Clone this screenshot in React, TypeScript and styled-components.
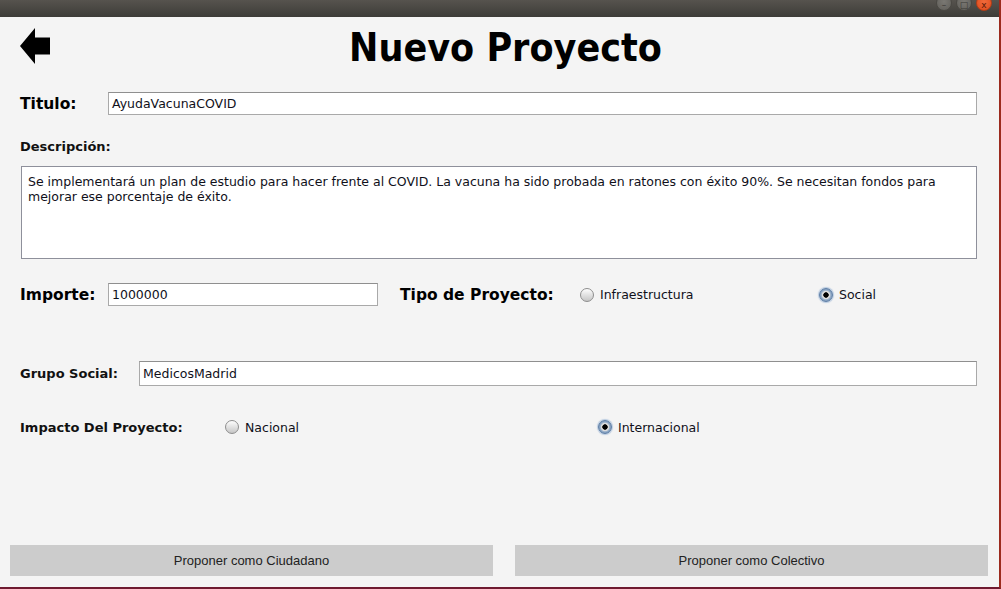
import React from "react";
import styled, { createGlobalStyle } from "styled-components";

const Global = createGlobalStyle`
  html, body { margin: 0; padding: 0; background: #f4f4f4; }
  #root { width: 1001px; height: 589px; }
  * { box-sizing: border-box; }
`;

const Window = styled.div`
  width: 1001px;
  height: 589px;
  display: flex;
  flex-direction: column;
  background: #f4f4f4;
  border-right: 2px solid #9c2b1e;
  border-bottom: 2px solid #6e1a30;
  overflow: hidden;
`;

const TitleBar = styled.div`
  height: 17px;
  flex: none;
  display: flex;
  justify-content: flex-end;
  align-items: flex-start;
  gap: 4px;
  padding-right: 7px;
  overflow: hidden;
  background: linear-gradient(#56534e, #3d3c38);
`;

const WinButton = styled.span<{ $close?: boolean }>`
  width: 16px;
  height: 16px;
  margin-top: -5px;
  border-radius: 50%;
  display: flex;
  align-items: center;
  justify-content: center;
  background: ${(p) =>
    p.$close
      ? "radial-gradient(circle at 50% 40%, #f26a3a, #dc4a1c)"
      : "radial-gradient(circle at 50% 40%, #7a7873, #5f5d58)"};
  border: 1px solid ${(p) => (p.$close ? "#b43d16" : "#4a4843")};
  color: ${(p) => (p.$close ? "#5a1a08" : "#3a3935")};
  font: 9px/1 "DejaVu Sans", sans-serif;
  padding-top: 5px;
`;

const Header = styled.div`
  height: 63px;
  flex: none;
  display: grid;
  grid-template-columns: 40px 1fr 48px;
  align-items: start;
  padding: 9px 0 0 20px;
`;

const BackArrow = styled.svg`
  width: 30px;
  height: 36px;
  margin-top: 2px;
  display: block;
`;

const Title = styled.h1`
  margin: 0;
  text-align: center;
  font-family: "DejaVu Sans", sans-serif;
  font-stretch: condensed;
  font-weight: bold;
  font-size: 39px;
  line-height: 44px;
  color: #000;
`;

const Row = styled.div<{ $top: number; $height: number }>`
  display: flex;
  align-items: center;
  flex: none;
  margin-top: ${(p) => p.$top}px;
  height: ${(p) => p.$height}px;
  padding: 0 22px 0 20px;
`;

const BigLabel = styled.span<{ $width?: number; $gap?: number }>`
  flex: none;
  width: ${(p) => (p.$width ? `${p.$width}px` : "auto")};
  margin-left: ${(p) => p.$gap ?? 0}px;
  font-family: "DejaVu Sans", sans-serif;
  font-weight: bold;
  font-size: 15.5px;
  color: #000;
  white-space: nowrap;
`;

const SmallLabel = styled.span<{ $width?: number }>`
  flex: none;
  width: ${(p) => (p.$width ? `${p.$width}px` : "auto")};
  font-family: "DejaVu Sans", sans-serif;
  font-weight: bold;
  font-size: 13px;
  line-height: 15px;
  color: #111;
  white-space: nowrap;
`;

const Field = styled.div<{ $width?: number }>`
  flex: ${(p) => (p.$width ? "none" : "1")};
  width: ${(p) => (p.$width ? `${p.$width}px` : "auto")};
  height: 100%;
  display: flex;
  align-items: center;
  padding-left: 3px;
  background: #fff;
  border: 1px solid #a9a9a9;
  border-top-color: #8f8f8f;
  font-family: "DejaVu Sans", sans-serif;
  font-size: 12.5px;
  color: #10101a;
`;

const TextArea = styled.div`
  flex: none;
  height: 93px;
  margin: 12px 22px 0 21px;
  padding: 7px 6px;
  background: #fff;
  border: 1px solid #8e909b;
  font-family: "DejaVu Sans", sans-serif;
  font-size: 12.5px;
  line-height: 15px;
  color: #10101a;
  white-space: pre-wrap;
`;

const Option = styled.label<{ $width?: number }>`
  flex: none;
  width: ${(p) => (p.$width ? `${p.$width}px` : "auto")};
  display: flex;
  align-items: center;
  gap: 6px;
  font-family: "DejaVu Sans", sans-serif;
  font-size: 12.5px;
  color: #10101a;
`;

const RadioDot = styled.span<{ $checked?: boolean }>`
  flex: none;
  width: 14px;
  height: 14px;
  border-radius: 50%;
  border: 1px solid ${(p) => (p.$checked ? "#5d7ea6" : "#8e8e8e")};
  background: ${(p) =>
    p.$checked
      ? "radial-gradient(circle, #000 0 2.4px, #dcdcdc 3px 3.8px, #9db3cc 4.6px, #7f9bbd 6px)"
      : "linear-gradient(#fdfdfd, #c6c6c6)"};
  box-shadow: ${(p) => (p.$checked ? "0 0 1px 1px rgba(110,150,200,0.45)" : "none")};
`;

const Spacer = styled.div`
  flex: 1;
`;

const ButtonBar = styled.div`
  flex: none;
  display: grid;
  grid-template-columns: 483px 1fr;
  gap: 22px;
  padding: 0 11px 11px 10px;
`;

const Button = styled.button`
  height: 31px;
  border: none;
  background: #cccccc;
  font-family: "Liberation Sans", Arial, sans-serif;
  font-size: 13px;
  color: #222;
  padding: 0;
`;

const descripcion =
  "Se implementará un plan de estudio para hacer frente al COVID. La vacuna ha sido probada en ratones con éxito 90%. Se necesitan fondos para\nmejorar ese porcentaje de éxito.";

export default function App() {
  return (
    <>
      <Global />
      <Window>
        <TitleBar>
          <WinButton>–</WinButton>
          <WinButton>□</WinButton>
          <WinButton $close>x</WinButton>
        </TitleBar>
        <Header>
          <BackArrow viewBox="0 0 30 36">
            <polygon points="0,18 15,0 15,9.5 30,9.5 30,26.5 15,26.5 15,36" fill="#000" />
          </BackArrow>
          <Title>Nuevo Proyecto</Title>
          <span />
        </Header>

        <Row $top={12} $height={23}>
          <BigLabel $width={88}>Titulo:</BigLabel>
          <Field>AyudaVacunaCOVID</Field>
        </Row>

        <Row $top={24} $height={15}>
          <SmallLabel>Descripción:</SmallLabel>
        </Row>
        <TextArea>{descripcion}</TextArea>

        <Row $top={24} $height={23}>
          <BigLabel $width={88}>Importe:</BigLabel>
          <Field $width={270}>1000000</Field>
          <BigLabel $gap={22} $width={180}>
            Tipo de Proyecto:
          </BigLabel>
          <Option $width={239}>
            <RadioDot />
            Infraestructura
          </Option>
          <Option>
            <RadioDot $checked />
            Social
          </Option>
        </Row>

        <Row $top={55} $height={25}>
          <SmallLabel $width={119}>Grupo Social:</SmallLabel>
          <Field>MedicosMadrid</Field>
        </Row>

        <Row $top={31} $height={20}>
          <SmallLabel $width={205}>Impacto Del Proyecto:</SmallLabel>
          <Option $width={373}>
            <RadioDot />
            Nacional
          </Option>
          <Option>
            <RadioDot $checked />
            Internacional
          </Option>
        </Row>

        <Spacer />
        <ButtonBar>
          <Button>Proponer como Ciudadano</Button>
          <Button>Proponer como Colectivo</Button>
        </ButtonBar>
      </Window>
    </>
  );
}
